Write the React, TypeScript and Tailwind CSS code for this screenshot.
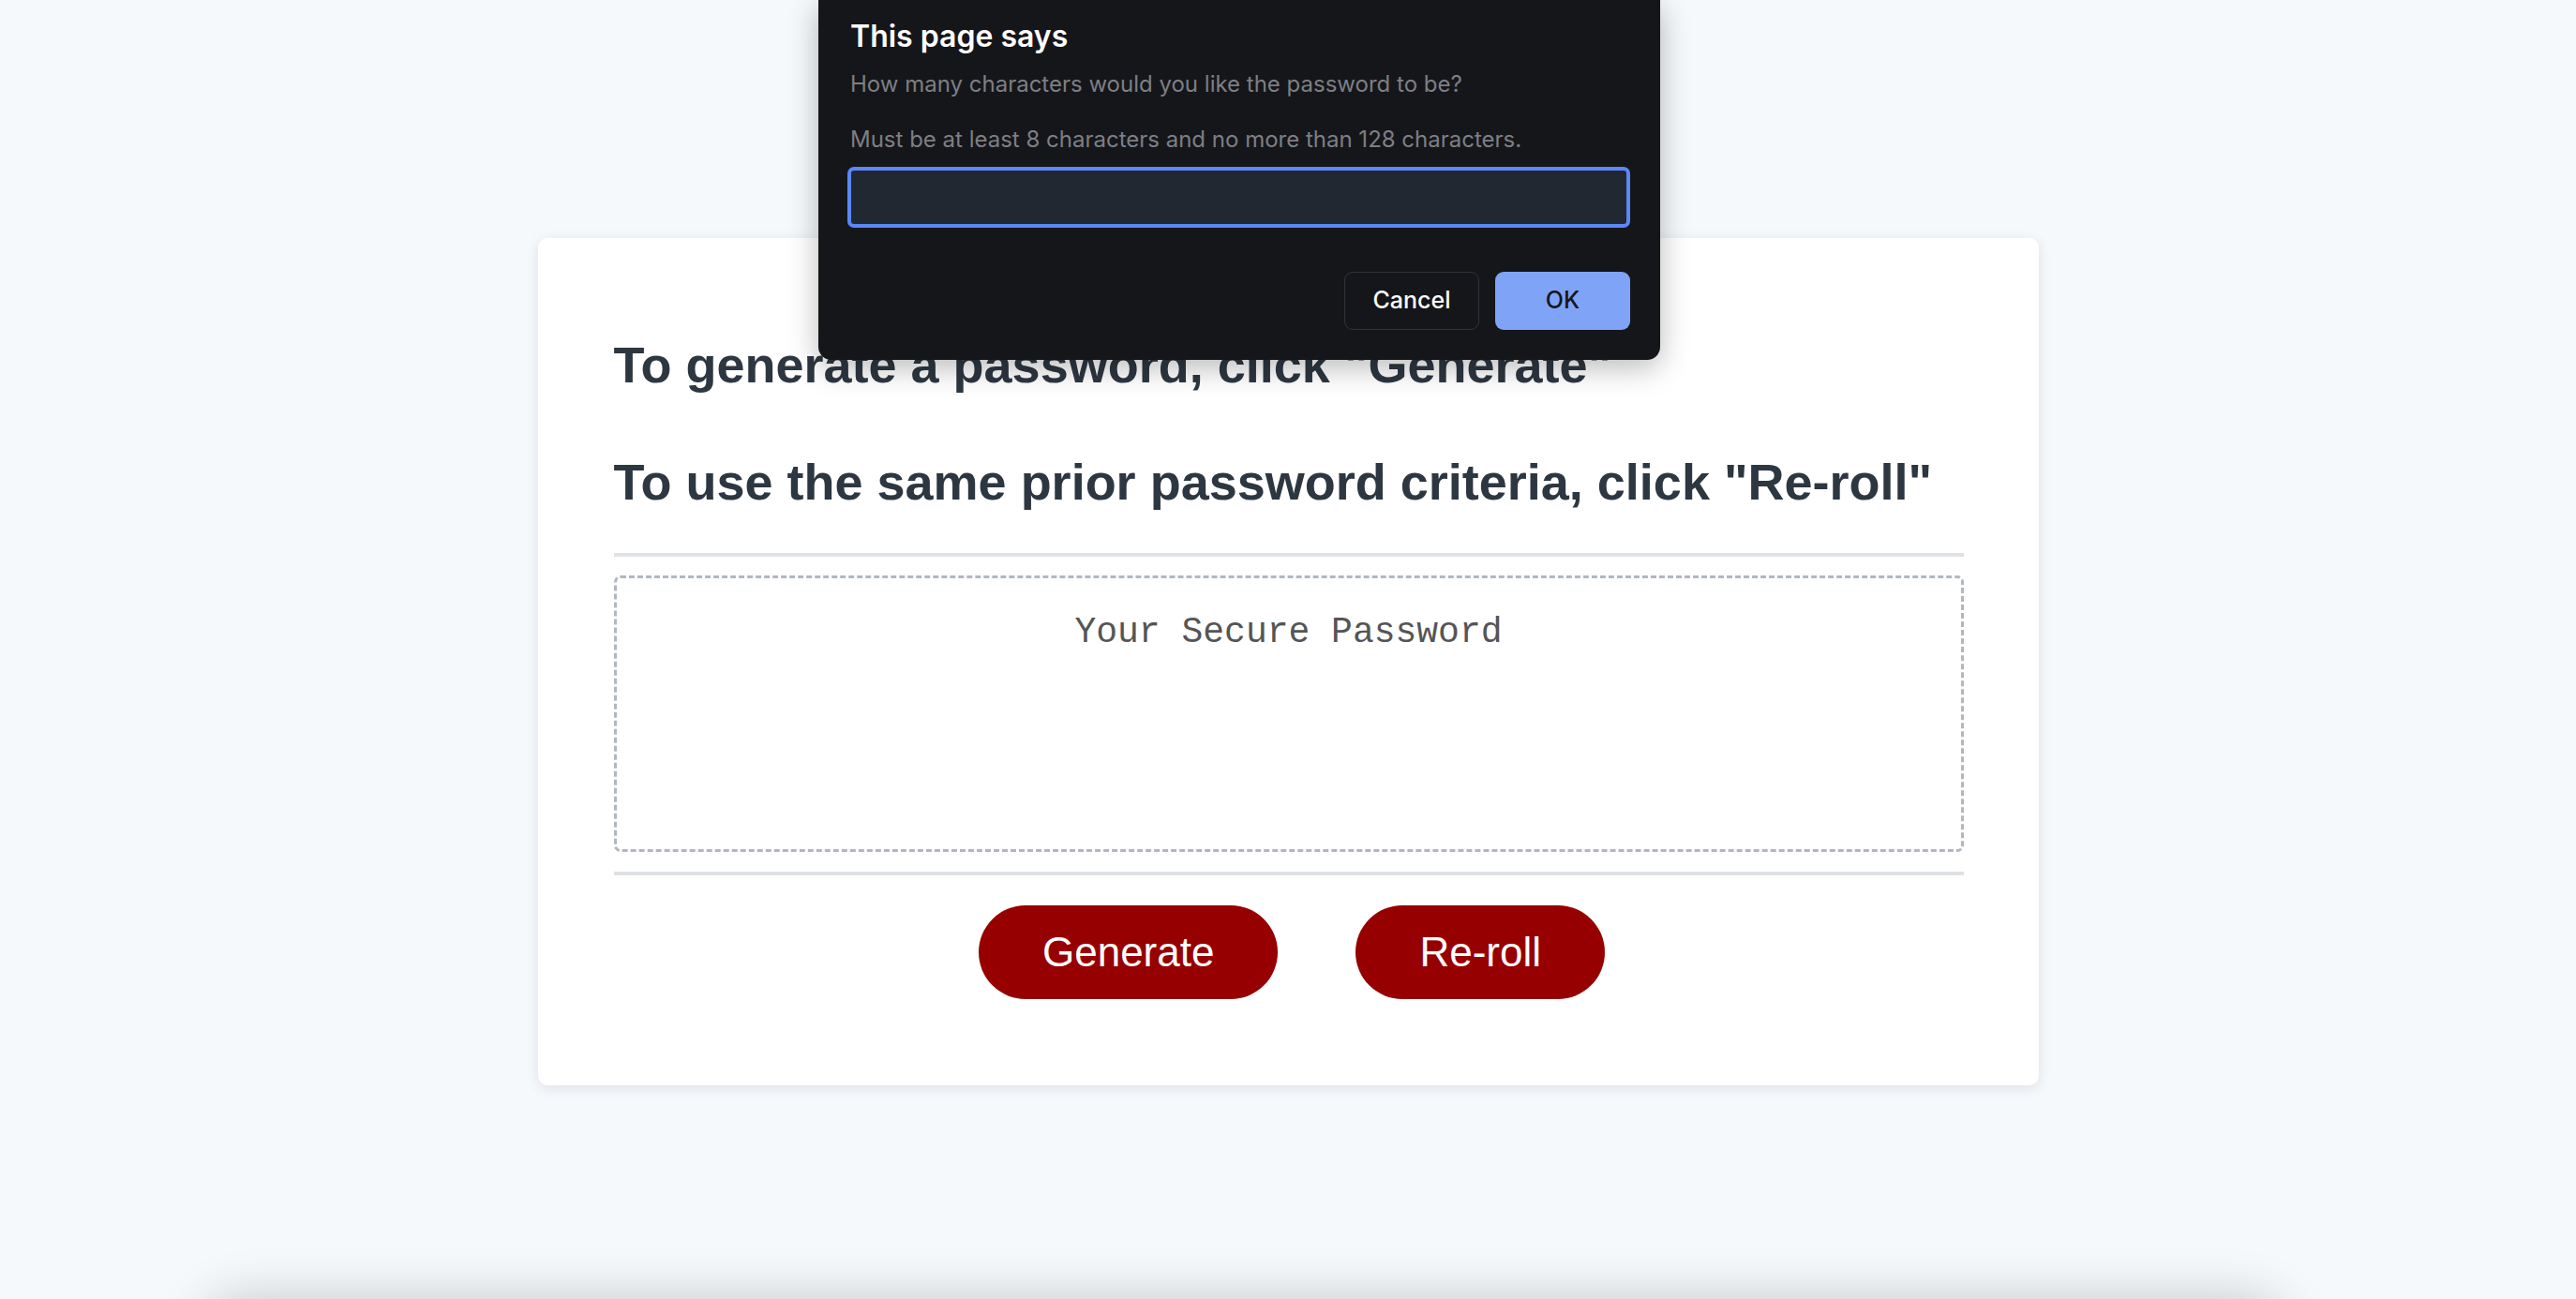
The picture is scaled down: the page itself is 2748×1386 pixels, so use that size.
import React from "react";

export default function App() {
  return (
    <div className="relative h-[1386px] w-full overflow-hidden bg-[#f5f9fc]">
      <div className="flex flex-col items-center pt-[254px]">
        {/* Card */}
        <div className="w-[1601px] rounded-[10px] bg-white pl-[81px] pr-[80px] pt-[104px] pb-[92px] shadow-[0_3px_14px_rgba(16,24,40,0.10)] font-['Liberation_Sans',Arial,sans-serif]">
          <h2 className="text-[54px] font-bold leading-[62px] text-[#2d3741]">
            To generate a password, click "Generate"
          </h2>
          <h2 className="mt-[63px] text-[54px] font-bold leading-[62px] text-[#2d3741]">
            To use the same prior password criteria, click "Re-roll"
          </h2>
          <div className="mt-[45px] h-[4px] bg-[#dee2e6]" />
          <div className="mt-[20px] h-[295px] rounded-[7px] border-[3px] border-dashed border-[#b1b7c1] pt-[36px] text-center font-['Liberation_Mono','Courier_New',monospace] text-[38px] leading-[43px] text-[#555555]">
            Your Secure Password
          </div>
          <div className="mt-[21px] h-[4px] bg-[#dee2e6]" />
          <div className="mt-[32px] flex justify-center gap-[83px] pl-[7px]">
            <button className="flex h-[100px] items-center rounded-full bg-[#960000] px-[68px] text-[44px] text-white">
              Generate
            </button>
            <button className="flex h-[100px] items-center rounded-full bg-[#960000] px-[68px] text-[44px] text-white">
              Re-roll
            </button>
          </div>
        </div>
        {/* element below the fold */}
        <div className="mt-[240px] ml-[-94px] h-[200px] w-[2190px] rounded-[20px] bg-white shadow-[0_0_55px_12px_rgba(0,0,0,0.2)]" />
      </div>

      {/* Prompt dialog overlay */}
      <div className="absolute left-[873px] top-0 flex w-[898px] flex-col rounded-b-[14px] bg-[#15161a] pl-[34px] pr-[32px] pt-[19px] pb-[32px] shadow-[0_8px_32px_rgba(0,0,0,0.28)] font-['Inter','Noto_Sans',sans-serif]">
        <div className="text-[32px] font-semibold leading-[40px] text-white">This page says</div>
        <div className="mt-[17px] text-[24px] leading-[28px] text-[#7d7f84]">
          How many characters would you like the password to be?
        </div>
        <div className="mt-[31px] text-[24px] leading-[28px] text-[#7d7f84]">
          Must be at least 8 characters and no more than 128 characters.
        </div>
        <div className="mt-[15px] ml-[-3px] h-[65px] rounded-[7px] border-[4px] border-[#5b87f7] bg-[#222831]" />
        <div className="mt-[47px] flex justify-end gap-[17px]">
          <button className="h-[62px] w-[144px] rounded-[9px] border border-[#30333a] bg-[#15161a] text-[25px] font-medium text-white">
            Cancel
          </button>
          <button className="h-[62px] w-[144px] rounded-[9px] bg-[#7fa3f7] text-[25px] font-medium text-[#15161a]">
            OK
          </button>
        </div>
      </div>
    </div>
  );
}
